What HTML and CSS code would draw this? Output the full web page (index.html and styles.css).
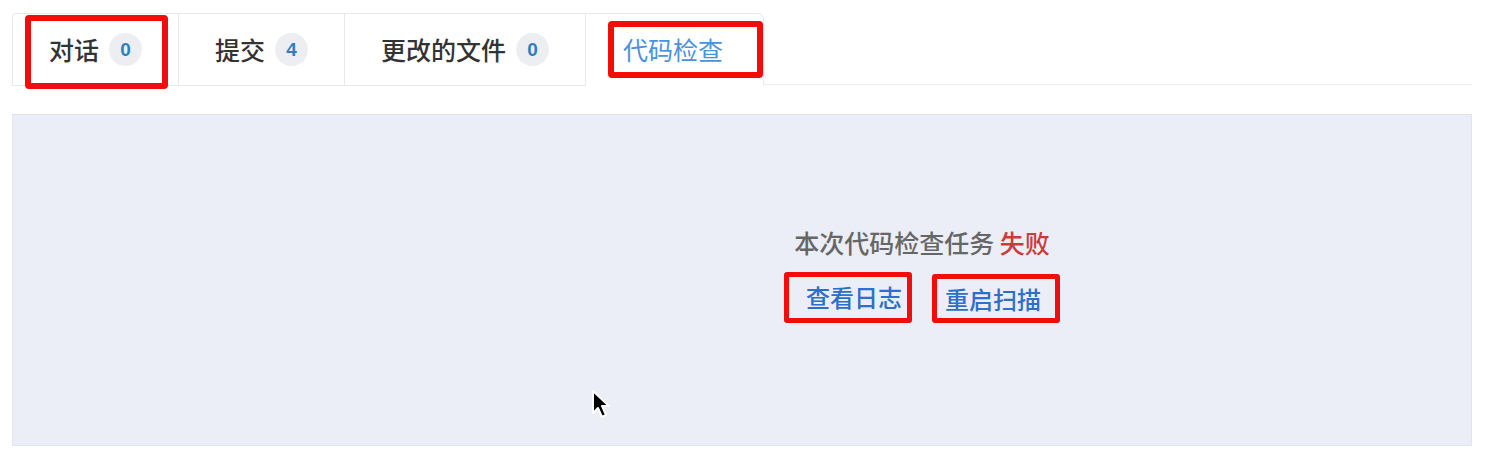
FILE: index.html
```html
<!DOCTYPE html>
<html lang="zh">
<head>
<meta charset="utf-8">
<title>代码检查</title>
<link rel="stylesheet" href="styles.css">
</head>
<body>
<div class="page">
  <div class="tabs">
    <div class="tab tab-first mark-tab1">
      <span class="tab-label">对话</span><span class="badge">0</span>
    </div>
    <div class="tab">
      <span class="tab-label">提交</span><span class="badge">4</span>
    </div>
    <div class="tab">
      <span class="tab-label">更改的文件</span><span class="badge">0</span>
    </div>
    <div class="tab tab-active mark-tab4">
      <span class="tab-label">代码检查</span>
    </div>
    <div class="tab-fill"></div>
  </div>
  <div class="panel">
    <div class="result">
      <p class="status">本次代码检查任务 <span class="fail">失败</span></p>
      <div class="actions">
        <a class="action action-log">查看日志</a>
        <a class="action action-rescan">重启扫描</a>
      </div>
    </div>
    <svg class="cursor" width="22" height="32" viewBox="0 0 22 32">
      <path d="M2 2 L2 24 L7 19 L11 28 L15 26 L11 17 L18 17 Z" fill="#000" stroke="#fff" stroke-width="2" stroke-linejoin="round"/>
    </svg>
  </div>
</div>
</body>
</html>
```

FILE: styles.css
```css
*, *::before, *::after { box-sizing: border-box; }
html, body { margin: 0; padding: 0; background: #fff; }
body {
  font-family: "Noto Sans CJK SC", "Noto Sans", sans-serif;
  color: #333;
}
.page {
  width: 1502px;
  height: 468px;
  padding: 13px 30px 0 12px;
  position: relative;
}
.tabs {
  display: flex;
  height: 73px;
  align-items: stretch;
}
.tab {
  position: relative;
  display: flex;
  align-items: center;
  gap: 10px;
  padding: 0 36px;
  border-top: 1px solid #e6e8ec;
  border-right: 1px solid #e6e8ec;
  border-bottom: 1px solid #e6e8ec;
  background: #fff;
  font-size: 25px;
  line-height: 1;
}
.tab-first {
  border-left: 1px solid #e6e8ec;
  border-top-left-radius: 4px;
}
.tab-active {
  border-bottom-color: transparent;
  border-top-right-radius: 6px;
  color: #4a92dc;
  padding: 0 40px 0 37px;
}
.tab-label { font-weight: 500; }
.tab-active .tab-label { font-weight: 400; }
.tab-fill {
  flex: 1;
  border-bottom: 1px solid #ebedf0;
  margin-bottom: 1px;
}
.badge {
  width: 33px;
  height: 33px;
  border-radius: 50%;
  background: #eceef1;
  color: #2f7fbf;
  font-family: "Liberation Sans", "Noto Sans", sans-serif;
  font-weight: 700;
  font-size: 19px;
  display: flex;
  align-items: center;
  justify-content: center;
}
.mark-tab1::after {
  content: "";
  position: absolute;
  left: 12px;
  top: 1px;
  width: 143px;
  height: 74px;
  border: 6px solid #f20d0d;
  border-radius: 4px;
}
.mark-tab4::after {
  content: "";
  position: absolute;
  left: 22px;
  top: 7px;
  width: 155px;
  height: 57px;
  border: 6px solid #f20d0d;
  border-radius: 4px;
}
.panel {
  position: relative;
  margin-top: 28px;
  height: 332px;
  background: #ebeef6;
  border: 1px solid #e2e5ec;
  border-top-color: #dde1e8;
  display: flex;
  justify-content: center;
  padding-left: 360px;
}
.result {
  display: flex;
  flex-direction: column;
  align-items: center;
  padding-top: 112px;
}
.status {
  margin: 0;
  font-size: 25px;
  line-height: 30px;
  color: #666;
  font-weight: 500;
}
.fail { color: #cd3a3a; }
.actions {
  display: flex;
  gap: 20px;
  margin-top: 15px;
  align-items: flex-end;
}
.action {
  display: block;
  border: 5px solid #f20d0d;
  border-radius: 3px;
  color: #2d6fca;
  font-size: 24px;
  font-weight: 500;
  line-height: 39px;
  cursor: pointer;
}
.action-log { padding: 0 5px 0 17px; height: 51px; }
.action-rescan { padding: 0 14px 0 8px; height: 49px; }
.cursor {
  position: absolute;
  left: 578px;
  top: 274px;
}
```
